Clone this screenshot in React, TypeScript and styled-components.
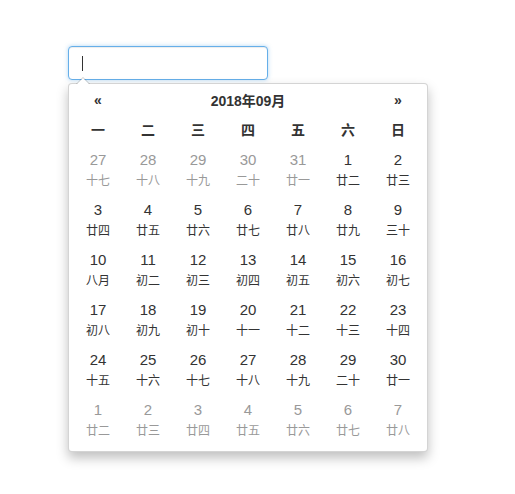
import React from "react";
import styled, { createGlobalStyle } from "styled-components";

const Global = createGlobalStyle`
  html, body { margin: 0; padding: 0; background: #fff; }
  body { font-family: "Liberation Sans", Arial, "Noto Sans CJK SC", sans-serif; color: #333; }
`;

const Page = styled.div`
  box-sizing: border-box;
  min-height: 100vh;
  padding: 46px 0 0 68px;
`;

const Field = styled.div`
  box-sizing: border-box;
  width: 200px;
  height: 34px;
  border: 1px solid #66afe9;
  border-radius: 4px;
  box-shadow: inset 0 1px 1px rgba(0, 0, 0, 0.075), 0 0 4px rgba(102, 175, 233, 0.5);
  display: flex;
  align-items: center;
  padding-left: 13px;
  background: #fff;
`;

const Caret = styled.span`
  width: 1px;
  height: 15px;
  background: #333;
`;

const Popup = styled.div`
  position: relative;
  box-sizing: border-box;
  width: 360px;
  margin-top: 3px;
  padding: 4px 4px 6px;
  background: #fff;
  border: 1px solid rgba(0, 0, 0, 0.17);
  border-radius: 4px;
  box-shadow: 0 6px 12px rgba(0, 0, 0, 0.25);
  &::before {
    content: "";
    position: absolute;
    top: -7px;
    left: 7px;
    border-left: 7px solid transparent;
    border-right: 7px solid transparent;
    border-bottom: 7px solid rgba(0, 0, 0, 0.2);
  }
  &::after {
    content: "";
    position: absolute;
    top: -6px;
    left: 8px;
    border-left: 6px solid transparent;
    border-right: 6px solid transparent;
    border-bottom: 6px solid #fff;
  }
`;

const Grid = styled.div`
  display: grid;
  grid-template-columns: repeat(7, 50px);
`;

const Header = styled.div`
  display: grid;
  grid-template-columns: 50px 1fr 50px;
  height: 24px;
  align-items: center;
  text-align: center;
  font-weight: bold;
  font-size: 14px;
  color: #333;
`;

const Nav = styled.span`
  font-size: 14px;
  font-weight: bold;
`;

const WeekCell = styled.div`
  height: 33px;
  display: flex;
  align-items: center;
  justify-content: center;
  font-family: "Noto Sans CJK SC", sans-serif;
  font-weight: bold;
  font-size: 14px;
  color: #333;
`;

const DayCell = styled.div<{ $muted?: boolean }>`
  height: 50px;
  display: flex;
  flex-direction: column;
  align-items: center;
  justify-content: center;
  color: ${(p) => (p.$muted ? "#999" : "#333")};
`;

const Num = styled.span`
  font-size: 15px;
  line-height: 20px;
`;

const Lunar = styled.span`
  font-family: "Noto Sans CJK SC", sans-serif;
  font-size: 12px;
  line-height: 20px;
`;

const weekdays = ["一", "二", "三", "四", "五", "六", "日"];

type Day = [number, string, boolean?];
const days: Day[] = [
  [27, "十七", true], [28, "十八", true], [29, "十九", true], [30, "二十", true], [31, "廿一", true], [1, "廿二"], [2, "廿三"],
  [3, "廿四"], [4, "廿五"], [5, "廿六"], [6, "廿七"], [7, "廿八"], [8, "廿九"], [9, "三十"],
  [10, "八月"], [11, "初二"], [12, "初三"], [13, "初四"], [14, "初五"], [15, "初六"], [16, "初七"],
  [17, "初八"], [18, "初九"], [19, "初十"], [20, "十一"], [21, "十二"], [22, "十三"], [23, "十四"],
  [24, "十五"], [25, "十六"], [26, "十七"], [27, "十八"], [28, "十九"], [29, "二十"], [30, "廿一"],
  [1, "廿二", true], [2, "廿三", true], [3, "廿四", true], [4, "廿五", true], [5, "廿六", true], [6, "廿七", true], [7, "廿八", true],
];

export default function App() {
  return (
    <Page>
      <Global />
      <Field>
        <Caret />
      </Field>
      <Popup>
        <Header>
          <Nav>«</Nav>
          <span>2018年09月</span>
          <Nav>»</Nav>
        </Header>
        <Grid>
          {weekdays.map((w) => (
            <WeekCell key={w}>{w}</WeekCell>
          ))}
          {days.map(([n, l, m], i) => (
            <DayCell key={i} $muted={m}>
              <Num>{n}</Num>
              <Lunar>{l}</Lunar>
            </DayCell>
          ))}
        </Grid>
      </Popup>
    </Page>
  );
}
